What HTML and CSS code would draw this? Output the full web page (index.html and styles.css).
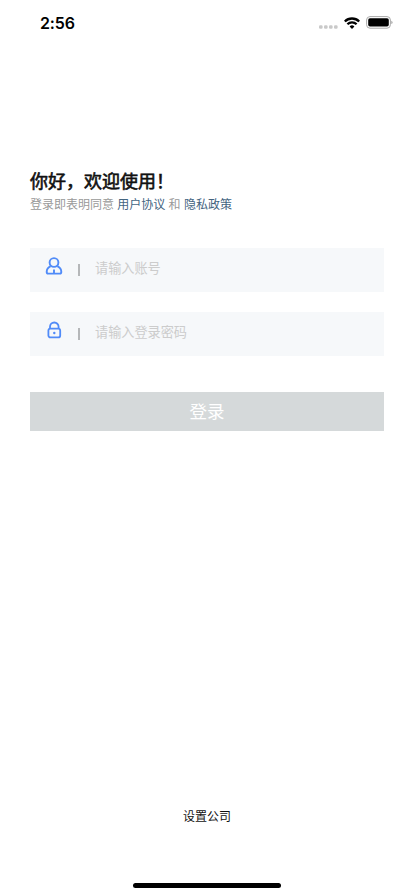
FILE: index.html
```html
<!DOCTYPE html>
<html lang="zh-CN">
<head>
<meta charset="utf-8">
<meta name="viewport" content="width=device-width, initial-scale=1">
<title>登录</title>
<link rel="stylesheet" href="styles.css">
</head>
<body>
<div class="screen">
  <header class="status">
    <span class="time">2:56</span>
    <div class="indicators">
      <svg class="signal" width="19" height="4" viewBox="0 0 19 4" fill="#c9c9c9"><rect y=".2" width="3.6" height="3.6" rx="1.3"/><rect x="5" y=".2" width="3.6" height="3.6" rx="1.3"/><rect x="10" y=".2" width="3.6" height="3.6" rx="1.3"/><rect x="15" y=".2" width="3.6" height="3.6" rx="1.3"/></svg>
      <svg class="wifi" width="16" height="12" viewBox="0 0 16 12" fill="none" stroke="#000" stroke-width="2.3"><path d="M.8 4.5a10.2 10.2 0 0 1 14.4 0M3.4 7.3a6.5 6.5 0 0 1 9.2 0"/><path d="M8 12 5.6 9.5a3.4 3.4 0 0 1 4.8 0z" fill="#000" stroke="none"/></svg>
      <svg class="battery" width="27" height="13" viewBox="0 0 27 13"><rect x=".6" y=".6" width="23.8" height="11.6" rx="3.4" fill="#fff" stroke="#a9a9a9"/><rect x="2.2" y="2.2" width="20.6" height="8.4" rx="1.8"/><path d="M25.4 4.7q1.1.5 1.1 1.7t-1.1 1.7z" fill="#999"/></svg>
    </div>
  </header>
  <main class="content">
    <h1 class="title">你好，欢迎使用！</h1>
    <p class="terms">登录即表明同意 <a class="link">用户协议</a> 和 <a class="link">隐私政策</a></p>
    <form class="form">
      <label class="field">
        <svg class="icon" width="18" height="18" viewBox="0 0 18 18" fill="none" stroke="#508bf8" stroke-width="1.9" stroke-linejoin="round"><circle cx="9" cy="5.5" r="4.4"/><path d="M5.7 9.2C3 10.4 1.7 12.5 1.7 15q0 1.6 1.6 1.6h11.4q1.6 0 1.6-1.6c0-2.5-1.3-4.6-4-5.8M9 12.5v4" /></svg>
        <span class="divider"></span>
        <input class="input" type="text" placeholder="请输入账号">
      </label>
      <label class="field">
        <svg class="icon" width="18" height="18" viewBox="0 0 18 18" fill="none" stroke="#508bf8" stroke-width="1.8"><rect x="3.4" y="7.6" width="11.8" height="8.8" rx="2"/><path d="M5 7.5V5.8a4.3 4.3 0 0 1 8.6 0v1.7"/><circle cx="9.3" cy="12" r="1.2" fill="#508bf8" stroke="none"/></svg>
        <span class="divider"></span>
        <input class="input" type="password" placeholder="请输入登录密码">
      </label>
      <button class="submit" type="button">登录</button>
    </form>
  </main>
  <footer class="footer">
    <a class="company">设置公司</a>
    <div class="home-bar"></div>
  </footer>
</div>
</body>
</html>
```
FILE: styles.css
```css
* { box-sizing: border-box; }
body {
  margin: 0;
  background: #fff;
  color: #111;
  font-family: "Noto Sans CJK SC", sans-serif;
}
.screen {
  height: 896px;
  display: flex;
  flex-direction: column;
  overflow: hidden;
}
.status {
  height: 46px;
  padding: 0 21px 0 40px;
  display: flex;
  align-items: center;
  justify-content: space-between;
}
.time {
  font: 600 16px/20px Inter, sans-serif;
  letter-spacing: -.15px;
  color: #000;
}
.indicators { display: flex; align-items: center; margin-top: -1px; }
.signal { margin: 9px 6px 0 0; }
.wifi { margin-right: 6px; }
.content { flex: 1; padding: 121px 30px 0; }
.title {
  margin: 0;
  font-size: 18px;
  line-height: 26px;
  font-weight: 400;
  -webkit-text-stroke: .6px #111;
}
.terms {
  margin: 0;
  padding-top: 1px;
  font-size: 12px;
  line-height: 20px;
  word-spacing: .6px;
  color: #999;
}
.link { color: #43647f; }
.form {
  margin-top: 34px;
  display: flex;
  flex-direction: column;
}
.field {
  height: 44px;
  margin-bottom: 20px;
  padding-left: 15px;
  display: flex;
  align-items: flex-start;
  background: #f6f8fa;
}
.icon { margin-top: 9px; }
.divider {
  width: 2px;
  height: 12px;
  margin: 16px 15px 0;
  background: #b5b7b9;
}
.input {
  flex: 1;
  min-width: 0;
  height: 39px;
  padding: 0;
  border: 0;
  outline: 0;
  background: transparent;
  font: 13.15px/20px "Noto Sans CJK SC", sans-serif;
}
.input::placeholder { color: #ccc; opacity: 1; }
.submit {
  height: 39px;
  margin-top: 16px;
  padding: 0 0 1px;
  border: 0;
  background: #d5d9da;
  color: #fff;
  font: 17.5px/38px "Noto Sans CJK SC", sans-serif;
}
.footer {
  height: 90px;
  display: flex;
  flex-direction: column;
  align-items: center;
}
.company { font-size: 12px; line-height: 20px; }
.home-bar {
  width: 148px;
  height: 5px;
  margin-top: 57px;
  border-radius: 3px;
  background: #000;
}
```
